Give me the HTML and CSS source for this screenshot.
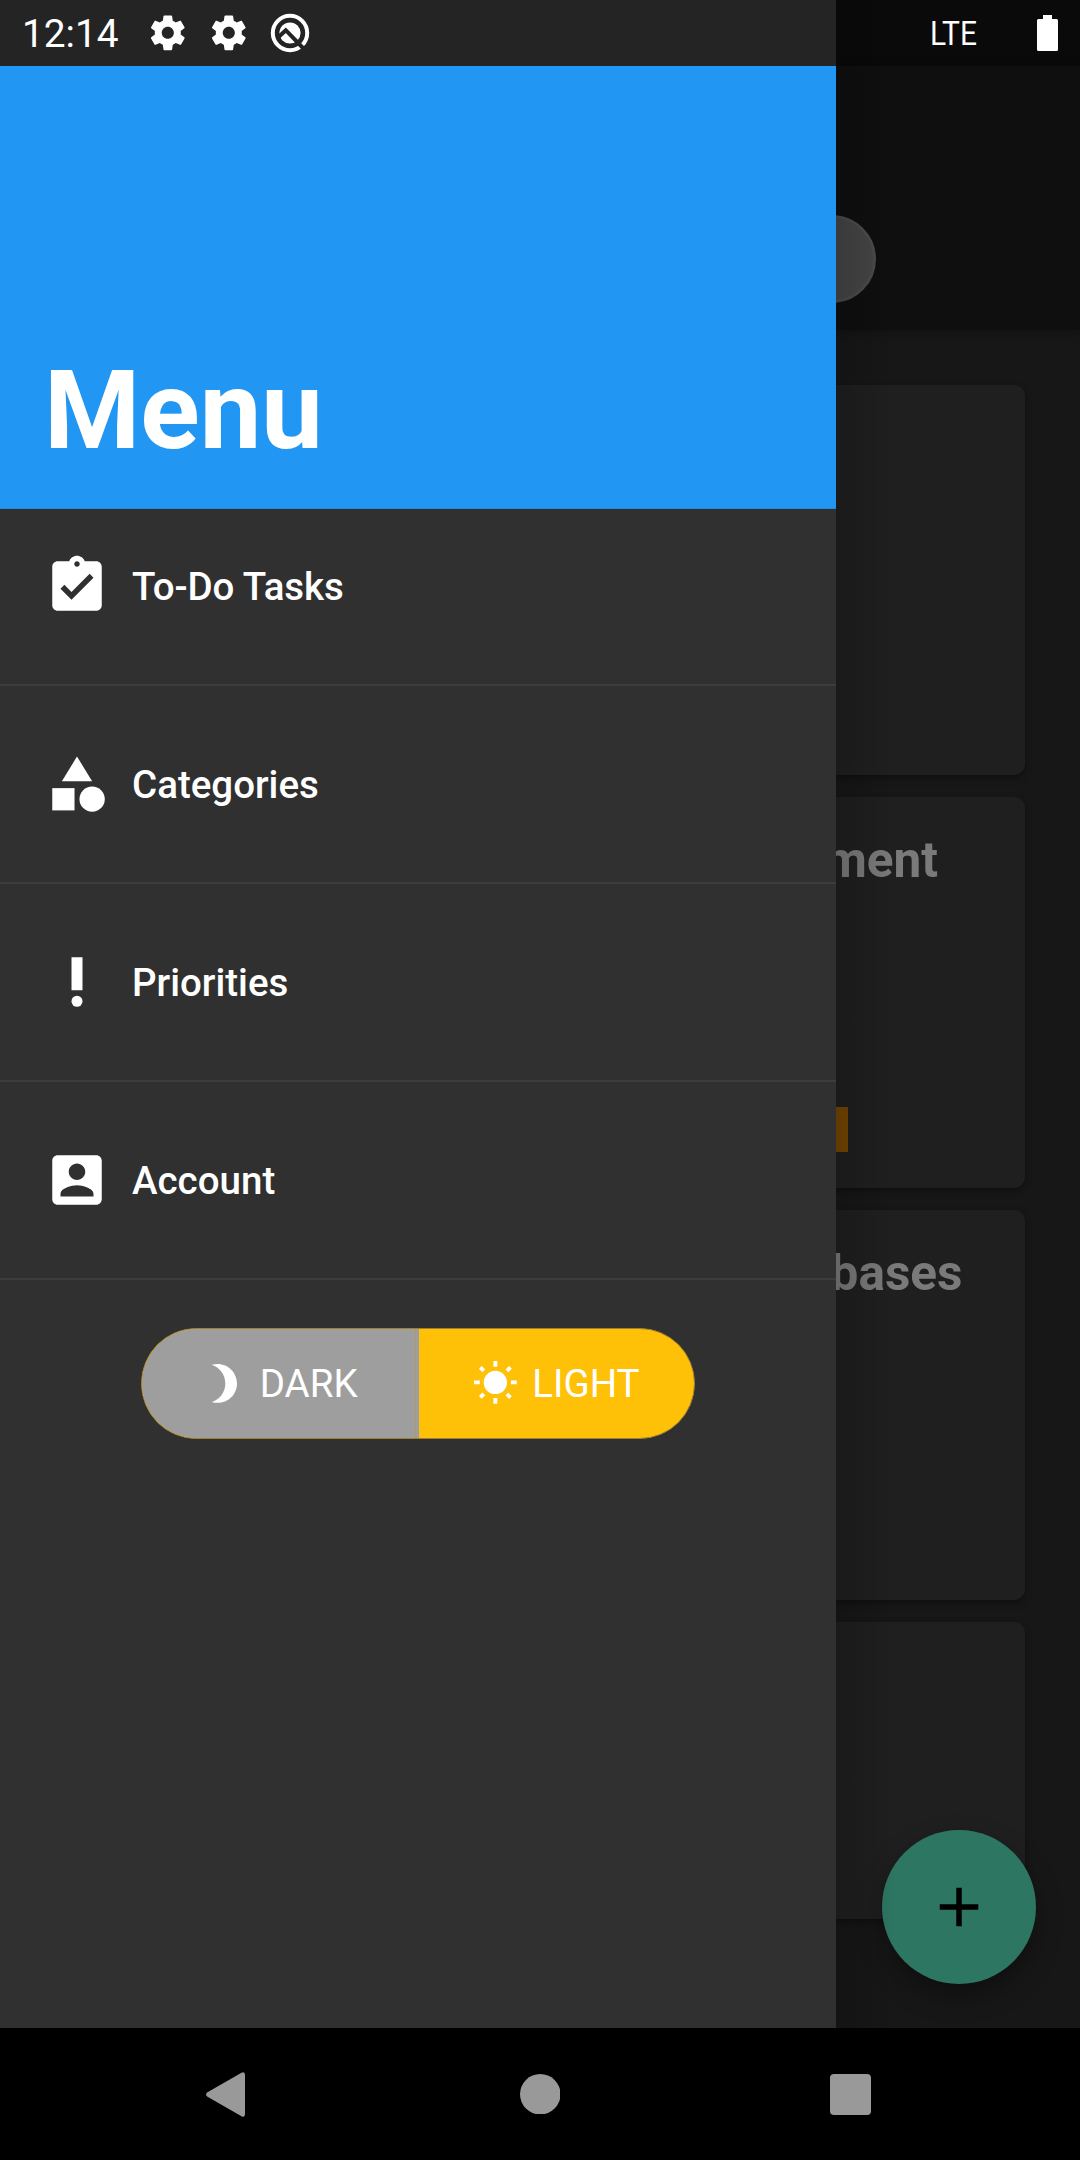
FILE: index.html
```html
<!DOCTYPE html>
<html lang="en">
<head>
<meta charset="utf-8">
<title>Menu</title>
<link rel="stylesheet" href="styles.css">
</head>
<body>
<div class="screen">
  <div class="app">
    <aside class="drawer">
      <div class="status status-left">
        <span class="clock">12:14</span>
        <svg class="gear" viewBox="0 0 24 24"><path d="M19.43 12.98c.04-.32.07-.64.07-.98s-.03-.66-.07-.98l2.11-1.65c.19-.15.24-.42.12-.64l-2-3.46c-.12-.22-.39-.3-.61-.22l-2.49 1c-.52-.4-1.08-.73-1.69-.98l-.38-2.65C14.46 2.18 14.25 2 14 2h-4c-.25 0-.46.18-.49.42l-.38 2.65c-.61.25-1.17.59-1.69.98l-2.49-1c-.23-.09-.49 0-.61.22l-2 3.46c-.13.22-.07.49.12.64l2.11 1.65c-.04.32-.07.65-.07.98s.03.66.07.98l-2.11 1.65c-.19.15-.24.42-.12.64l2 3.46c.12.22.39.3.61.22l2.49-1c.52.4 1.08.73 1.69.98l.38 2.65c.03.24.24.42.49.42h4c.25 0 .46-.18.49-.42l.38-2.65c.61-.25 1.17-.59 1.69-.98l2.49 1c.23.09.49 0 .61-.22l2-3.46c.12-.22.07-.49-.12-.64l-2.11-1.65zM12 15.5c-1.93 0-3.5-1.57-3.5-3.5s1.57-3.5 3.5-3.5 3.5 1.57 3.5 3.5-1.57 3.5-3.5 3.5z"/></svg>
        <svg class="gear" viewBox="0 0 24 24"><path d="M19.43 12.98c.04-.32.07-.64.07-.98s-.03-.66-.07-.98l2.11-1.65c.19-.15.24-.42.12-.64l-2-3.46c-.12-.22-.39-.3-.61-.22l-2.49 1c-.52-.4-1.08-.73-1.69-.98l-.38-2.65C14.46 2.18 14.25 2 14 2h-4c-.25 0-.46.18-.49.42l-.38 2.65c-.61.25-1.17.59-1.69.98l-2.49-1c-.23-.09-.49 0-.61.22l-2 3.46c-.13.22-.07.49.12.64l2.11 1.65c-.04.32-.07.65-.07.98s.03.66.07.98l-2.11 1.65c-.19.15-.24.42-.12.64l2 3.46c.12.22.39.3.61.22l2.49-1c.52.4 1.08.73 1.69.98l.38 2.65c.03.24.24.42.49.42h4c.25 0 .46-.18.49-.42l.38-2.65c.61-.25 1.17-.59 1.69-.98l2.49 1c.23.09.49 0 .61-.22l2-3.46c.12-.22.07-.49-.12-.64l-2.11-1.65zM12 15.5c-1.93 0-3.5-1.57-3.5-3.5s1.57-3.5 3.5-3.5 3.5 1.57 3.5 3.5-1.57 3.5-3.5 3.5z"/></svg>
        <svg class="badge-q" viewBox="0 0 40 40">
          <circle class="ring" cx="20" cy="20" r="17.200"/>
          <circle cx="20" cy="20" r="10.600"/>
          <path class="cut" d="M8 24.500L15.800 17.200L33 35"/>
        </svg>
      </div>
      <header class="drawer-header"><h1>Menu</h1></header>
      <nav class="menu">
        <a class="item item-first">
          <svg class="icon" viewBox="0 0 24 24"><path d="M19 3h-4.18C14.4 1.84 13.3 1 12 1s-2.4.84-2.82 2H5c-1.1 0-2 .9-2 2v14c0 1.1.9 2 2 2h14c1.1 0 2-.9 2-2V5c0-1.1-.9-2-2-2zm-7 0c.55 0 1 .45 1 1s-.45 1-1 1-1-.45-1-1 .45-1 1-1zm-2 14l-4-4 1.41-1.41L10 14.17l6.59-6.59L18 9l-8 8z"/></svg>
          <span>To-Do Tasks</span>
        </a>
        <a class="item">
          <svg class="icon" viewBox="0 0 24 24"><path d="M12 2l-5.500 9h11z"/><circle cx="17.500" cy="17.500" r="4.600"/><path d="M3 13.500h8.100v8.100H3z"/></svg>
          <span>Categories</span>
        </a>
        <a class="item">
          <svg class="icon" viewBox="0 0 24 24"><circle cx="12" cy="19" r="2"/><path d="M10 3h4v12h-4z"/></svg>
          <span>Priorities</span>
        </a>
        <a class="item">
          <svg class="icon" viewBox="0 0 24 24"><path d="M3 5v14c0 1.1.89 2 2 2h14c1.1 0 2-.9 2-2V5c0-1.1-.9-2-2-2H5c-1.11 0-2 .9-2 2zm12 4c0 1.66-1.34 3-3 3s-3-1.34-3-3 1.34-3 3-3 3 1.34 3 3zm-9 8c0-2 4-3.1 6-3.1s6 1.1 6 3.1v1H6v-1z"/></svg>
          <span>Account</span>
        </a>
      </nav>
      <div class="toggle">
        <div class="half dark">
          <svg class="mode" viewBox="0 0 24 24"><path d="M9 2c-1.05 0-2.05.16-3 .46 4.06 1.27 7 5.06 7 9.54 0 4.48-2.94 8.27-7 9.54.95.3 1.95.46 3 .46 5.52 0 10-4.48 10-10S14.52 2 9 2z"/></svg>
          <span>DARK</span>
        </div>
        <div class="half light">
          <svg class="mode" viewBox="0 0 24 24"><path d="M6.76 4.84l-1.8-1.79-1.41 1.41 1.79 1.79 1.42-1.41zM4 10.5H1v2h3v-2zm9-9.95h-2V3.5h2V.55zm7.45 3.91l-1.41-1.41-1.79 1.79 1.41 1.41 1.79-1.79zm-3.21 13.7l1.79 1.8 1.41-1.41-1.8-1.79-1.4 1.4zM20 10.5v2h3v-2h-3zm-8-5c-3.31 0-6 2.69-6 6s2.69 6 6 6 6-2.69 6-6-2.69-6-6-6zm-1 16.95h2V19.5h-2v2.95zm-7.45-3.91l1.41 1.41 1.79-1.8-1.41-1.41-1.79 1.8z"/></svg>
          <span>LIGHT</span>
        </div>
      </div>
    </aside>
    <main class="page">
      <div class="status status-right">
        <span class="lte">LTE</span>
        <svg class="battery" viewBox="0 0 21 36"><path d="M6 0h9v4h4.500q1.500 0 1.500 1.500v29q0 1.500-1.500 1.500h-18q-1.500 0-1.500-1.500v-29q0-1.500 1.500-1.500h4.500z"/></svg>
      </div>
      <div class="appbar"><div class="pill"></div></div>
      <div class="cards">
        <section class="card"></section>
        <section class="card">
          <h2 class="title title-a">ment</h2>
          <div class="tag"></div>
        </section>
        <section class="card"><h2 class="title title-b">bases</h2></section>
        <section class="card card-last"></section>
      </div>
      <button class="fab"><svg viewBox="0 0 24 24"><path d="M19 13h-6v6h-2v-6H5v-2h6V5h2v6h6v2z"/></svg></button>
    </main>
  </div>
  <footer class="navbar">
    <svg viewBox="0 0 39 45"><path d="M35.500 .7Q39-1 39 3v39q0 4-3.500 2.300L1.500 24.800q-3-2.300 0-4.600z"/></svg>
    <svg viewBox="0 0 40 40"><circle cx="20" cy="20" r="20"/></svg>
    <svg viewBox="0 0 41 41"><rect width="41" height="41" rx="4"/></svg>
  </footer>
</div>
</body>
</html>
```
FILE: styles.css
```css
* { box-sizing: border-box; }

body {
  margin: 0;
  background: #000;
  color: #fff;
  font-family: Roboto, "Liberation Sans", sans-serif;
}

svg { display: block; fill: #fff; flex: none; }
h1, h2 { margin: 0; font-weight: 700; }

.screen { width: 1080px; height: 2160px; overflow: hidden; display: flex; flex-direction: column; }
.app { display: flex; height: 2028px; }

/* Drawer */
.drawer { width: 836px; background: #303030; display: flex; flex-direction: column; }
.status { height: 66px; flex: none; display: flex; }
.status-left { background: #242424; align-items: center; padding-left: 22px; }
.clock { width: 125.200px; font-size: 38.800px; line-height: 66px; padding-top: 2px; }
.gear { width: 41.600px; height: 41.600px; margin-right: 19.300px; }
.badge-q { width: 40px; height: 40px; margin-left: 1.500px; }
.ring { fill: none; stroke: #fff; stroke-width: 4; }
.cut { fill: none; stroke: #242424; stroke-width: 4; }

.drawer-header {
  height: 443px;
  background: #2196f3;
  border-bottom: 1px solid #2589d9;
  padding: 280px 44px 0;
}
.drawer-header h1 { font-size: 110px; line-height: 130px; }

.item {
  height: 198px;
  border-bottom: 2px solid #3c3c3c;
  display: flex;
  align-items: center;
  gap: 22px;
  padding-left: 44px;
  font-size: 38.500px;
  font-weight: 500;
}
.item-first { height: 177px; padding-bottom: 21px; letter-spacing: -.1px; }
.icon { width: 66px; height: 66px; }

.toggle {
  width: 554px;
  height: 111px;
  margin: 48px 0 0 141px;
  border: 1px solid #a08030;
  border-radius: 56px;
  overflow: hidden;
  display: flex;
  background: #ffc107;
  font-size: 38.500px;
}
.half { display: flex; align-items: center; gap: 14px; }
.dark { width: 277px; background: #9e9e9e; padding-left: 57.500px; gap: 13.500px; box-shadow: inset -3px 0 0 #9e9e9e, inset -4px 0 0 #ab9a70; }
.light { flex: 1; padding-left: 53px; gap: 13.500px; }
.mode { width: 46.750px; height: 46.750px; }

/* Page behind the drawer */
.page {
  position: relative;
  width: 244px;
  background: #171717;
  display: flex;
  flex-direction: column;
  overflow: hidden;
}
.page::after {
  content: "";
  position: absolute;
  inset: 0 auto 0 0;
  width: 60px;
  background: linear-gradient(90deg, rgba(0,0,0,.16), rgba(0,0,0,0));
}
.status-right { background: #0a0a0a; padding: 15px 22px 0 94px; justify-content: space-between; }
.lte { font-size: 34px; line-height: 36px; transform: scaleX(.88); transform-origin: 0 0; }
.battery { width: 21px; height: 36px; }
.appbar { height: 264px; flex: none; background: #0f0f0f; padding-top: 148.500px; box-shadow: 0 2px 10px rgba(0,0,0,.3); }
.pill {
  width: 88px;
  height: 88px;
  margin-left: -48px;
  border-radius: 50%;
  background: #454545;
  border: 3px solid #4b4b4b;
}

.cards { display: flex; flex-direction: column; gap: 22px; padding-top: 54.600px; }
.card {
  width: 289px;
  height: 390.500px;
  margin-left: -100px;
  flex: none;
  border-radius: 11px;
  background: #1f1f1f;
  box-shadow: 0 3px 7px rgba(0,0,0,.35);
  display: flex;
  flex-direction: column;
  align-items: flex-start;
  justify-content: space-between;
}
.card-last { height: 297px; }
.title { align-self: flex-end; font-size: 49.500px; line-height: 58px; color: #7a7a7a; padding-top: 33.600px; }
.title-a { padding-right: 87px; }
.title-b { padding-right: 62.500px; padding-top: 34.400px; }
.tag { width: 112px; height: 45px; margin-bottom: 35.500px; background: #744500; }

.fab {
  position: absolute;
  left: 46px;
  top: 1830px;
  width: 154px;
  height: 154px;
  padding: 0;
  border: 0;
  border-radius: 50%;
  background: #2d7661;
  display: flex;
  align-items: center;
  justify-content: center;
  box-shadow: 0 12px 26px rgba(0,0,0,.35);
}
.fab svg { width: 66px; height: 66px; fill: #000; }

/* System navigation */
.navbar { height: 132px; display: flex; align-items: center; gap: 274.500px; padding-left: 206px; }
.navbar svg { fill: #999; }
.navbar svg:nth-child(1) { width: 39px; height: 45px; }
.navbar svg:nth-child(2) { width: 40.500px; height: 40.500px; }
.navbar svg:nth-child(3) { width: 41px; height: 41px; margin-left: -4.500px; }
```
